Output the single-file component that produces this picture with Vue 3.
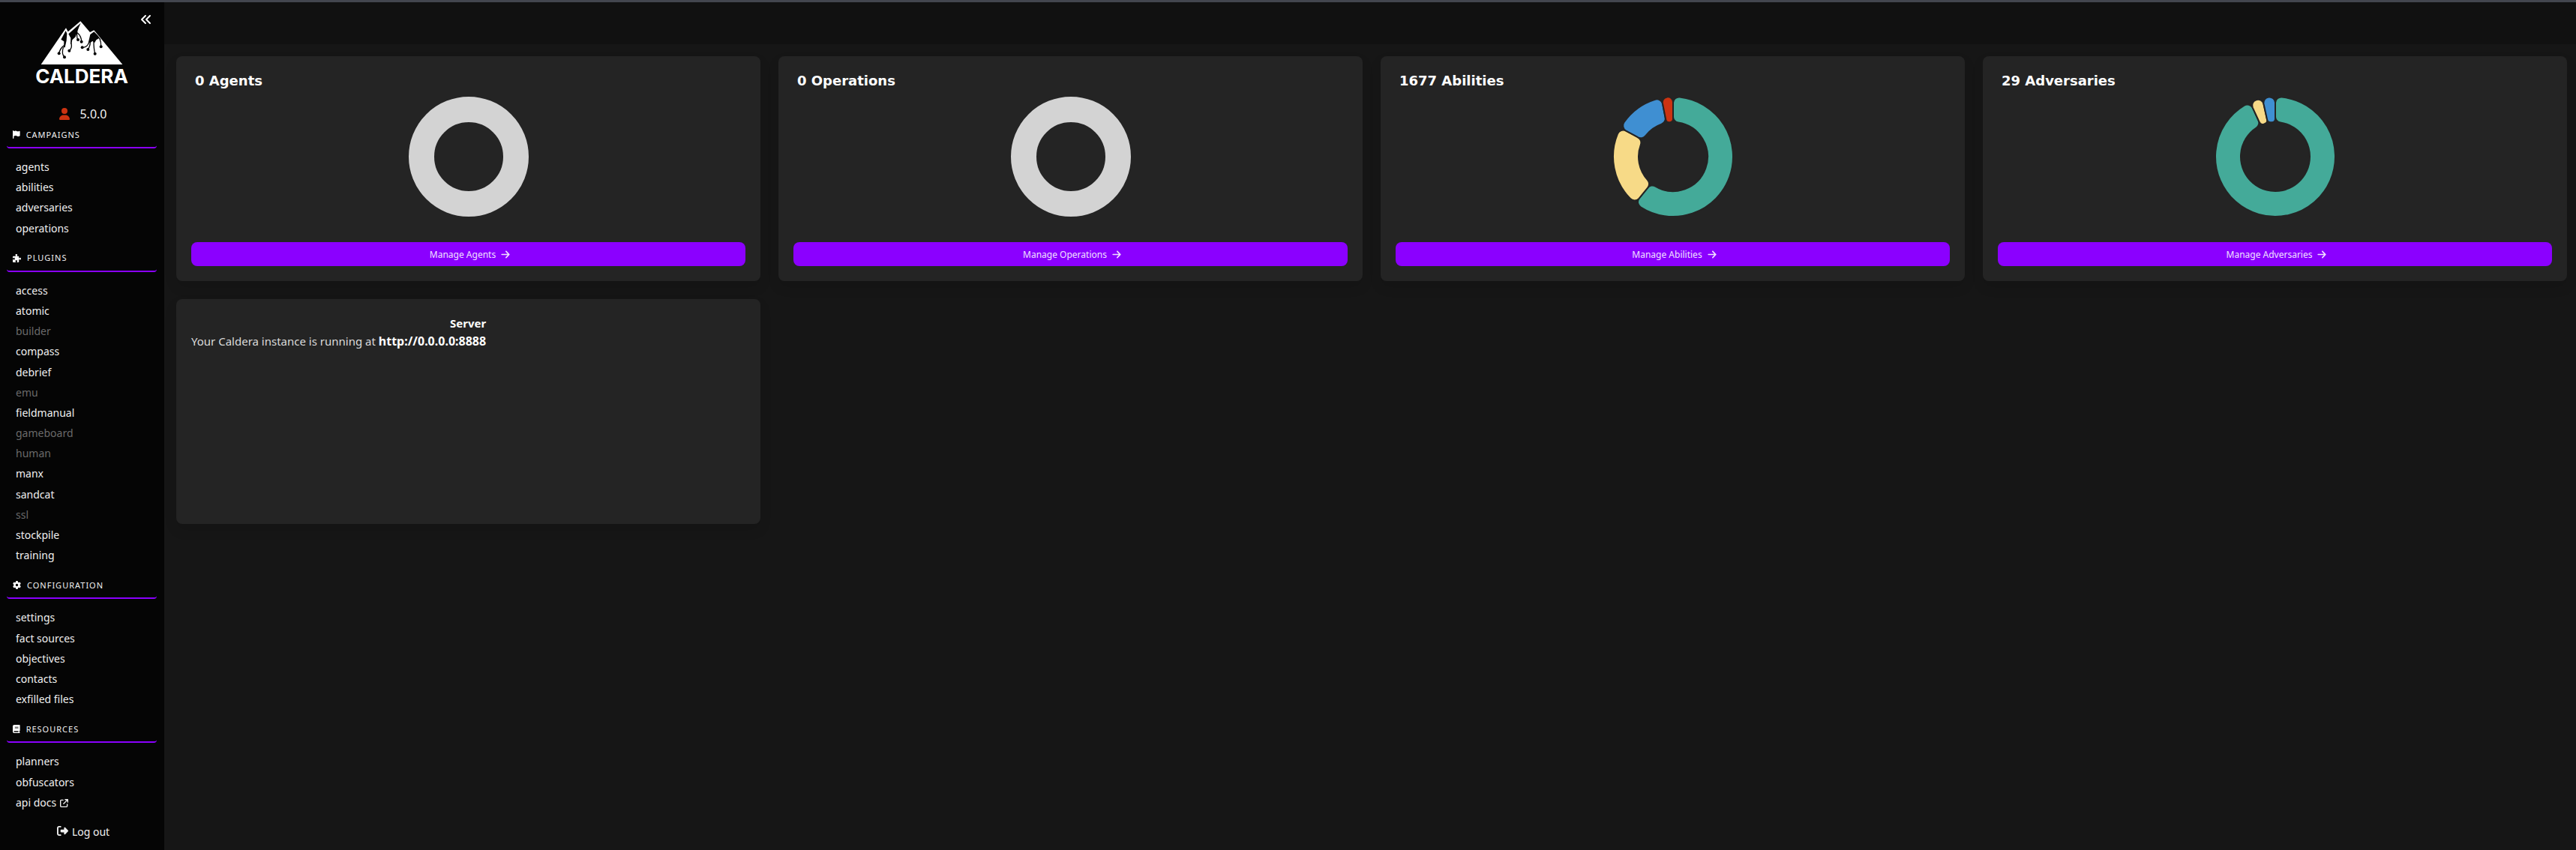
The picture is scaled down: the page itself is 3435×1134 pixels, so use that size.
<script setup>
const ICONS = {
  flag: {
    w: 448,
    d: 'M64 32C64 14.3 49.7 0 32 0S0 14.3 0 32V64 368 480c0 17.7 14.3 32 32 32s32-14.3 32-32V352l64.3-16.1c41.1-10.3 84.6-5.5 122.5 13.4c44.2 22.1 95.5 24.8 141.7 7.4l34.7-13c12.5-4.7 20.8-16.6 20.8-30V66.1c0-23-24.2-38-44.8-27.7l-9.6 4.8c-46.3 23.2-100.8 23.2-147.1 0c-35.1-17.6-75.4-22-113.5-12.5L64 48V32z',
  },
  puzzle: {
    w: 512,
    d: 'M192 104.8c0-9.2-5.8-17.3-13.2-22.8C167.2 73.3 160 61.3 160 48c0-26.5 28.7-48 64-48s64 21.5 64 48c0 13.3-7.2 25.3-18.8 34c-7.4 5.5-13.2 13.6-13.2 22.8c0 12.8 10.4 23.2 23.2 23.2H336c26.5 0 48 21.5 48 48v56.8c0 12.8 10.4 23.2 23.2 23.2c9.2 0 17.3-5.8 22.8-13.2c8.7-11.6 20.7-18.8 34-18.8c26.5 0 48 28.7 48 64s-21.5 64-48 64c-13.3 0-25.3-7.2-34-18.8c-5.5-7.4-13.6-13.2-22.8-13.2c-12.8 0-23.2 10.4-23.2 23.2V464c0 26.5-21.5 48-48 48H279.2c-12.8 0-23.2-10.4-23.2-23.2c0-9.2 5.8-17.3 13.2-22.8c11.6-8.7 18.8-20.7 18.8-34c0-26.5-28.7-48-64-48s-64 21.5-64 48c0 13.3 7.2 25.3 18.8 34c7.4 5.5 13.2 13.6 13.2 22.8c0 12.8-10.4 23.2-23.2 23.2H48c-26.5 0-48-21.5-48-48V343.2C0 330.4 10.4 320 23.2 320c9.2 0 17.3 5.8 22.8 13.2C54.7 344.8 66.7 352 80 352c26.5 0 48-28.7 48-64s-21.5-64-48-64c-13.3 0-25.3 7.2-34 18.8C40.5 250.2 32.4 256 23.2 256C10.4 256 0 245.6 0 232.8V176c0-26.5 21.5-48 48-48H168.8c12.8 0 23.2-10.4 23.2-23.2z',
  },
  gear: {
    w: 512,
    d: 'M495.9 166.6c3.2 8.7 .5 18.4-6.4 24.6l-43.3 39.4c1.1 8.3 1.7 16.8 1.7 25.4s-.6 17.1-1.7 25.4l43.3 39.4c6.9 6.2 9.6 15.9 6.4 24.6c-4.4 11.9-9.7 23.3-15.8 34.3l-4.7 8.1c-6.6 11-14 21.4-22.1 31.2c-5.9 7.2-15.7 9.6-24.5 6.8l-55.7-17.7c-13.4 10.3-28.2 18.9-44 25.4l-12.5 57.1c-2 9.1-9 16.3-18.2 17.8c-13.8 2.3-28 3.5-42.5 3.5s-28.7-1.2-42.5-3.5c-9.2-1.5-16.2-8.7-18.2-17.8l-12.5-57.1c-15.8-6.5-30.6-15.1-44-25.4L83.1 425.9c-8.8 2.8-18.6 .3-24.5-6.8c-8.1-9.8-15.5-20.2-22.1-31.2l-4.7-8.1c-6.1-11-11.4-22.4-15.8-34.3c-3.2-8.7-.5-18.4 6.4-24.6l43.3-39.4C64.6 273.1 64 264.6 64 256s.6-17.1 1.7-25.4L22.4 191.2c-6.9-6.2-9.6-15.9-6.4-24.6c4.4-11.9 9.7-23.3 15.8-34.3l4.7-8.1c6.6-11 14-21.4 22.1-31.2c5.9-7.2 15.7-9.6 24.5-6.8l55.7 17.7c13.4-10.3 28.2-18.9 44-25.4l12.5-57.1c2-9.1 9-16.3 18.2-17.8C227.3 1.2 241.5 0 256 0s28.7 1.2 42.5 3.5c9.2 1.5 16.2 8.7 18.2 17.8l12.5 57.1c15.8 6.5 30.6 15.1 44 25.4l55.7-17.7c8.8-2.8 18.6-.3 24.5 6.8c8.1 9.8 15.5 20.2 22.1 31.2l4.7 8.1c6.1 11 11.4 22.4 15.8 34.3zM256 336a80 80 0 1 0 0-160 80 80 0 1 0 0 160z',
  },
  book: {
    w: 448,
    d: 'M96 0C43 0 0 43 0 96V416c0 53 43 96 96 96H384h32c17.7 0 32-14.3 32-32s-14.3-32-32-32V384c17.7 0 32-14.3 32-32V32c0-17.7-14.3-32-32-32H384 96zm0 384H352v64H96c-17.7 0-32-14.3-32-32s14.3-32 32-32zm32-240c0-8.8 7.2-16 16-16H336c8.8 0 16 7.2 16 16s-7.2 16-16 16H144c-8.8 0-16-7.2-16-16zm16 48H336c8.8 0 16 7.2 16 16s-7.2 16-16 16H144c-8.8 0-16-7.2-16-16s7.2-16 16-16z',
  },
}

const SECTIONS = [
  { title: 'Campaigns', icon: 'flag', items: ['agents', 'abilities', 'adversaries', 'operations'] },
  {
    title: 'Plugins',
    icon: 'puzzle',
    items: ['access', 'atomic', 'builder', 'compass', 'debrief', 'emu', 'fieldmanual', 'gameboard', 'human', 'manx', 'sandcat', 'ssl', 'stockpile', 'training'],
  },
  { title: 'Configuration', icon: 'gear', items: ['settings', 'fact sources', 'objectives', 'contacts', 'exfilled files'] },
  { title: 'Resources', icon: 'book', items: ['planners', 'obfuscators', 'api docs'] },
]
const DISABLED = ['builder', 'emu', 'gameboard', 'human', 'ssl']

const GREEN = '#44aa99'
const YELLOW = '#f7da87'
const BLUE = '#3f8fd2'
const RED = '#cc3311'

const OUTER = 80
const INNER = 46
const CORNER = 8

const xy = (r, a) => `${(r * Math.sin(a)).toFixed(2)} ${(-r * Math.cos(a)).toFixed(2)}`

/* Ring segment with rounded corners; angles run clockwise from the top. */
function segment(start, end) {
  const delta = end - start
  const half = (OUTER - INNER) / 2
  const ri = Math.min(CORNER, half, (delta * INNER) / 2)
  const ro = Math.min(CORNER, half, ((OUTER - Math.min(half, CORNER)) * delta) / 2)
  const oa = ro / (OUTER - ro)
  const ia = ri / (INNER + ri)
  const outerLarge = delta - 2 * oa > Math.PI ? 1 : 0
  const innerLarge = delta - 2 * ia > Math.PI ? 1 : 0
  return [
    `M${xy(OUTER, start + oa)}`,
    `A${OUTER} ${OUTER} 0 ${outerLarge} 1 ${xy(OUTER, end - oa)}`,
    `A${ro} ${ro} 0 0 1 ${xy(OUTER - ro, end)}`,
    `L${xy(INNER + ri, end)}`,
    `A${ri} ${ri} 0 0 1 ${xy(INNER, end - ia)}`,
    `A${INNER} ${INNER} 0 ${innerLarge} 0 ${xy(INNER, start + ia)}`,
    `A${ri} ${ri} 0 0 1 ${xy(INNER + ri, start)}`,
    `L${xy(OUTER - ro, start)}`,
    `A${ro} ${ro} 0 0 1 ${xy(OUTER, start + oa)}Z`,
  ].join('')
}

function slices(parts) {
  const total = parts.reduce((sum, [, value]) => sum + value, 0)
  let at = 0
  return parts.map(([color, value]) => {
    const start = at
    at += (value / total) * Math.PI * 2
    return { color, d: segment(start, at) }
  })
}

const CARDS = [
  { count: 0, name: 'Agents', slices: [] },
  { count: 0, name: 'Operations', slices: [] },
  { count: 1677, name: 'Abilities', slices: slices([[GREEN, 1021], [YELLOW, 371], [BLUE, 233], [RED, 52]]) },
  { count: 29, name: 'Adversaries', slices: slices([[GREEN, 27], [YELLOW, 1], [BLUE, 1]]) },
]
</script>

<template>
  <div class="app">
    <aside class="sidebar">
      <button class="collapse" type="button" aria-label="Collapse menu">
        <svg viewBox="0 0 512 512" width="16" height="16">
          <path d="M41.4 233.4c-12.5 12.5-12.5 32.8 0 45.3l160 160c12.5 12.5 32.8 12.5 45.3 0s12.5-32.8 0-45.3L109.3 256 246.6 118.6c12.5-12.5 12.5-32.8 0-45.3s-32.8-12.5-45.3 0l-160 160zm352-160l-160 160c-12.5 12.5-12.5 32.8 0 45.3l160 160c12.5 12.5 32.8 12.5 45.3 0s12.5-32.8 0-45.3L301.3 256 438.6 118.6c12.5-12.5 12.5-32.8 0-45.3s-32.8-12.5-45.3 0z" />
        </svg>
      </button>

      <div class="logo">
        <svg viewBox="164 84 328 174" width="110" height="58" aria-hidden="true">
          <path fill="#fff" d="M165 258L265 112L273 127L323 85L361 129L377 121L491 258Z" />
          <g fill="#050505">
            <path d="M264 123L269 134L267 162L261 190L256 190L257 166L245 158Z" />
            <path d="M324 92L317 108L309 130L303 148L290 160L287 176L283 176L284 152L275 136Z" />
            <path d="M377 127L392 142L406 160L396 154L386 160L379 172L371 164L362 172L355 168L362 138Z" />
          </g>
          <g fill="none" stroke="#050505" stroke-width="4" stroke-linecap="round">
            <path d="M258 182Q242 192 237 214" />
            <path d="M254 190Q246 216 259 228" />
            <path d="M285 172Q292 190 278 203" />
            <path d="M309 124Q307 150 313 159" />
            <path d="M311 132Q326 144 327 166" />
            <path d="M358 166Q352 190 330 190" />
            <path d="M362 166Q362 186 353 197" />
            <path d="M376 166Q376 196 381 214" />
            <path d="M400 156Q406 168 405 187" />
          </g>
          <g fill="#050505">
            <circle cx="237" cy="214" r="6" /><circle cx="259" cy="229" r="6" />
            <circle cx="278" cy="203" r="6" /><circle cx="313" cy="159" r="6" />
            <circle cx="327" cy="167" r="6" /><circle cx="330" cy="190" r="6" />
            <circle cx="353" cy="198" r="6" /><circle cx="381" cy="215" r="6" />
            <circle cx="405" cy="187" r="6" />
          </g>
        </svg>
        <span class="wordmark">CALDERA</span>
      </div>

      <div class="version">
        <svg viewBox="0 0 448 512" width="14" height="16" aria-hidden="true">
          <path d="M224 256A128 128 0 1 0 224 0a128 128 0 1 0 0 256zm-45.7 48C79.8 304 0 383.8 0 482.3C0 498.7 13.3 512 29.7 512H418.3c16.4 0 29.7-13.3 29.7-29.7C448 383.8 368.2 304 269.7 304H178.3z" />
        </svg>
        <span>5.0.0</span>
      </div>

      <nav>
        <section v-for="s in SECTIONS" :key="s.title">
          <h2 class="menu-label">
            <svg :viewBox="`0 0 ${ICONS[s.icon].w} 512`" height="11" aria-hidden="true">
              <path :d="ICONS[s.icon].d" fill-rule="evenodd" />
            </svg>
            <span>{{ s.title }}</span>
          </h2>
          <ul class="menu-list">
            <li v-for="item in s.items" :key="item">
              <a href="#" :class="{ disabled: DISABLED.includes(item) }">{{ item }}<svg v-if="item === 'api docs'" class="external" viewBox="0 0 512 512" width="11" height="11" aria-hidden="true">
                <path d="M320 0c-17.7 0-32 14.3-32 32s14.3 32 32 32h82.7L201.4 265.4c-12.5 12.5-12.5 32.8 0 45.3s32.8 12.5 45.3 0L448 109.3V192c0 17.7 14.3 32 32 32s32-14.3 32-32V32c0-17.7-14.3-32-32-32H320zM80 32C35.8 32 0 67.8 0 112V432c0 44.2 35.8 80 80 80H400c44.2 0 80-35.8 80-80V320c0-17.7-14.3-32-32-32s-32 14.3-32 32V432c0 8.8-7.2 16-16 16H80c-8.8 0-16-7.2-16-16V112c0-8.8 7.2-16 16-16H192c17.7 0 32-14.3 32-32s-14.3-32-32-32H80z" />
              </svg></a>
            </li>
          </ul>
        </section>
      </nav>

      <a class="logout" href="#">
        <svg viewBox="0 0 512 512" width="15" height="15" aria-hidden="true">
          <path d="M377.9 105.9L500.7 228.7c7.2 7.2 11.3 17.1 11.3 27.3s-4.1 20.1-11.3 27.3L377.9 406.1c-6.4 6.4-15 9.9-24 9.9c-18.7 0-33.9-15.2-33.9-33.9l0-62.1-128 0c-17.7 0-32-14.3-32-32l0-64c0-17.7 14.3-32 32-32l128 0 0-62.1c0-18.7 15.2-33.9 33.9-33.9c9 0 17.6 3.6 24 9.9zM160 96L96 96c-17.7 0-32 14.3-32 32l0 256c0 17.7 14.3 32 32 32l64 0c17.7 0 32 14.3 32 32s-14.3 32-32 32l-64 0c-53 0-96-43-96-96L0 128C0 75 43 32 96 32l64 0c17.7 0 32 14.3 32 32s-14.3 32-32 32z" />
        </svg>
        <span>Log out</span>
      </a>
    </aside>

    <div class="content">
      <header class="navbar"></header>
      <main class="grid">
        <article v-for="c in CARDS" :key="c.name" class="card">
          <h3 class="card-title">{{ c.count }} {{ c.name }}</h3>
          <svg class="donut" viewBox="-80 -80 160 160" width="160" height="160" role="img" :aria-label="`${c.name} chart`">
            <circle v-if="!c.slices.length" r="63" fill="none" stroke="#d3d3d3" stroke-width="34" />
            <path v-for="s in c.slices" :key="s.color" :d="s.d" :fill="s.color" stroke="#242424" stroke-width="2" />
          </svg>
          <button class="manage" type="button">
            <span>Manage {{ c.name }}</span>
            <svg viewBox="0 0 448 512" width="12" height="13" aria-hidden="true">
              <path d="M438.6 278.6c12.5-12.5 12.5-32.8 0-45.3l-160-160c-12.5-12.5-32.8-12.5-45.3 0s-12.5 32.8 0 45.3L338.8 224 32 224c-17.7 0-32 14.3-32 32s14.3 32 32 32l306.7 0L233.4 393.4c-12.5 12.5-12.5 32.8 0 45.3s32.8 12.5 45.3 0l160-160z" />
            </svg>
          </button>
        </article>

        <article class="card">
          <div class="server">
            <h3>Server</h3>
            <p>Your Caldera instance is running at <strong>http://0.0.0.0:8888</strong></p>
          </div>
        </article>
      </main>
    </div>
  </div>
</template>

<style>
body {
  background: #161616;
}
</style>

<style scoped>
* {
  box-sizing: border-box;
  margin: 0;
}
.app {
  display: flex;
  min-height: 100vh;
  border-top: 3px solid #43464f;
  background: #161616;
  color: #dbdbdb;
  font: 15px/24px 'Noto Sans', 'Open Sans', sans-serif;
}
svg {
  display: block;
  flex: none;
  fill: currentColor;
}
button {
  border: 0;
  font-family: inherit;
  cursor: pointer;
}
a {
  color: inherit;
  text-decoration: none;
}

.sidebar {
  position: relative;
  flex: none;
  width: 219px;
  padding: 25px 10px 0 9px;
  background: #050505;
  color: #f0f0f0;
}
.collapse {
  position: absolute;
  top: 15px;
  right: 16px;
  padding: 0;
  background: none;
  color: #fff;
}
.logo {
  display: flex;
  flex-direction: column;
  align-items: center;
  gap: 4px;
}
.wordmark {
  color: #fff;
  font: bold 26px/24px Inter, sans-serif;
}
.version {
  display: flex;
  align-items: center;
  justify-content: center;
  gap: 13px;
  margin-top: 26px;
  padding-left: 4px;
  font-size: 16px;
}
.version svg {
  color: #cc3311;
}
.menu-label {
  display: flex;
  align-items: center;
  gap: 8px;
  height: 29px;
  margin-top: 16px;
  padding: 0 8px 6px;
  border-bottom: 2px solid #8b00ff;
  border-radius: 4px;
  font-size: 11px;
  font-weight: 400;
  line-height: 18px;
  letter-spacing: 1px;
  text-transform: uppercase;
}
.menu-label svg {
  color: #fff;
}
section:first-child .menu-label {
  margin-top: 5px;
}
.menu-list {
  margin-top: 11px;
  padding: 0 12px;
  list-style: none;
  font-size: 16px;
  line-height: 1.7;
}
.menu-list a {
  font-size: 14px;
}
.menu-list .disabled {
  color: #6a6a6a;
}
.external {
  display: inline-block;
  margin-left: 5px;
  vertical-align: -1px;
}
.logout {
  display: flex;
  justify-content: center;
  gap: 5px;
  margin-top: 14px;
  padding-left: 4px;
  font-size: 14px;
}
.logout svg {
  margin-top: 3px;
}

.content {
  flex: 1;
  min-width: 0;
}
.navbar {
  height: 56px;
  background: #111;
}
.grid {
  display: grid;
  grid-template-columns: repeat(4, minmax(0, 1fr));
  gap: 24px;
  padding: 16px 12px 16px 16px;
}
.card {
  display: flex;
  flex-direction: column;
  min-height: 300px;
  padding: 20px;
  border-radius: 8px;
  background: #242424;
  box-shadow: 0 8px 16px rgba(10, 10, 10, 0.1);
}
.card-title {
  padding-left: 5px;
  color: #fff;
  font: bold 18px/26px 'DejaVu Sans', sans-serif;
}
.donut {
  align-self: center;
  margin-top: 8px;
}
.manage {
  display: flex;
  align-items: center;
  justify-content: center;
  gap: 7px;
  height: 32px;
  margin-top: auto;
  padding: 0 4px 0 8px;
  border-radius: 8px;
  background: #8b00ff;
  color: #f0e0ff;
  font-size: 12px;
}
.server {
  align-self: flex-start;
  text-align: right;
}
.server h3 {
  color: #fff;
  font-size: 15px;
}
.server strong {
  color: #fff;
  font-size: 16px;
}
@media (max-width: 1400px) {
  .grid {
    grid-template-columns: repeat(2, minmax(0, 1fr));
  }
}
@media (max-width: 760px) {
  .grid {
    grid-template-columns: minmax(0, 1fr);
  }
}
</style>
